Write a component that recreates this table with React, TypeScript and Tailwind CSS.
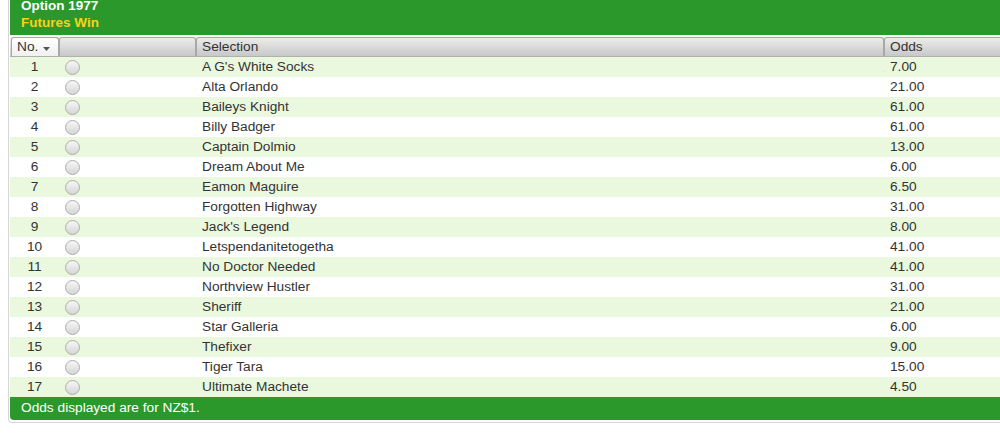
import React from "react";

const rows: [number, string, string][] = [
  [1, "A G's White Socks", "7.00"],
  [2, "Alta Orlando", "21.00"],
  [3, "Baileys Knight", "61.00"],
  [4, "Billy Badger", "61.00"],
  [5, "Captain Dolmio", "13.00"],
  [6, "Dream About Me", "6.00"],
  [7, "Eamon Maguire", "6.50"],
  [8, "Forgotten Highway", "31.00"],
  [9, "Jack's Legend", "8.00"],
  [10, "Letspendanitetogetha", "41.00"],
  [11, "No Doctor Needed", "41.00"],
  [12, "Northview Hustler", "31.00"],
  [13, "Sheriff", "21.00"],
  [14, "Star Galleria", "6.00"],
  [15, "Thefixer", "9.00"],
  [16, "Tiger Tara", "15.00"],
  [17, "Ultimate Machete", "4.50"],
];

export default function App() {
  return (
    <div
      className="w-[1000px] h-[443px] bg-white overflow-hidden pl-[8px]"
      style={{ fontFamily: '"Liberation Sans", Arial, sans-serif' }}
    >
      <div className="w-[1010px] border-l border-b border-[#d6d6d6] rounded-bl-[4px] pl-[1px] pb-[2px] text-[13.7px]">
        {/* header */}
        <div className="h-[35px] bg-[#2a982a] pl-[11px] overflow-hidden">
          <div className="-mt-[3px] font-bold leading-[17px] text-[13.5px]">
            <div className="text-white">Option 1977</div>
            <div className="text-[#f7d21a]">Futures Win</div>
          </div>
        </div>
        {/* table header */}
        <div className="mt-[2px] flex h-[20px] pl-[1px] bg-gradient-to-b from-[#f2f2f2] to-[#c9c9c9] border-b border-[#b0b0b0]">
          <div className="w-[48px] shrink-0 rounded-t-[3px] border border-b-0 border-[#a8a8a8] bg-gradient-to-b from-white to-[#f0f0f0] flex items-center pl-[5px] text-[#333] leading-none">
            No.
            <svg width="7" height="4" viewBox="0 0 7 4" className="ml-[5px] mt-[3px]">
              <path d="M0 0 L7 0 L3.5 4 Z" fill="#555" />
            </svg>
          </div>
          <div className="w-[137px] shrink-0 rounded-t-[3px] border border-b-0 border-[#a8a8a8] bg-gradient-to-b from-[#ececec] to-[#c8c8c8]" />
          <div className="w-[688px] shrink-0 rounded-t-[3px] border border-b-0 border-[#a8a8a8] bg-gradient-to-b from-[#ececec] to-[#c8c8c8] flex items-center pl-[5px] text-[#333] leading-none">
            Selection
          </div>
          <div className="w-[130px] shrink-0 rounded-t-[3px] border border-b-0 border-[#a8a8a8] bg-gradient-to-b from-[#ececec] to-[#c8c8c8] flex items-center pl-[5px] text-[#333] leading-none">
            Odds
          </div>
        </div>
        {/* rows */}
        <div>
          {rows.map(([n, name, odds], i) => (
            <div
              key={n}
              className={`flex h-[20px] items-center text-[#333] ${i % 2 === 0 ? "bg-[#eaf8de]" : "bg-white"}`}
            >
              <div className="w-[49px] shrink-0 text-center">{n}</div>
              <div className="w-[137px] shrink-0 pl-[6px] flex items-center">
                <div className="w-[15px] h-[15px] rounded-full border border-[#adadad] bg-gradient-to-b from-[#f6f6f6] to-[#d6d6d6]" />
              </div>
              <div className="w-[688px] shrink-0 pl-[6px]">{name}</div>
              <div className="w-[130px] shrink-0 pl-[6px]">{odds}</div>
            </div>
          ))}
        </div>
        {/* footer */}
        <div className="h-[23px] bg-[#2a982a] rounded-bl-[4px] flex items-center pl-[11px] text-white">
          Odds displayed are for NZ$1.
        </div>
      </div>
    </div>
  );
}
